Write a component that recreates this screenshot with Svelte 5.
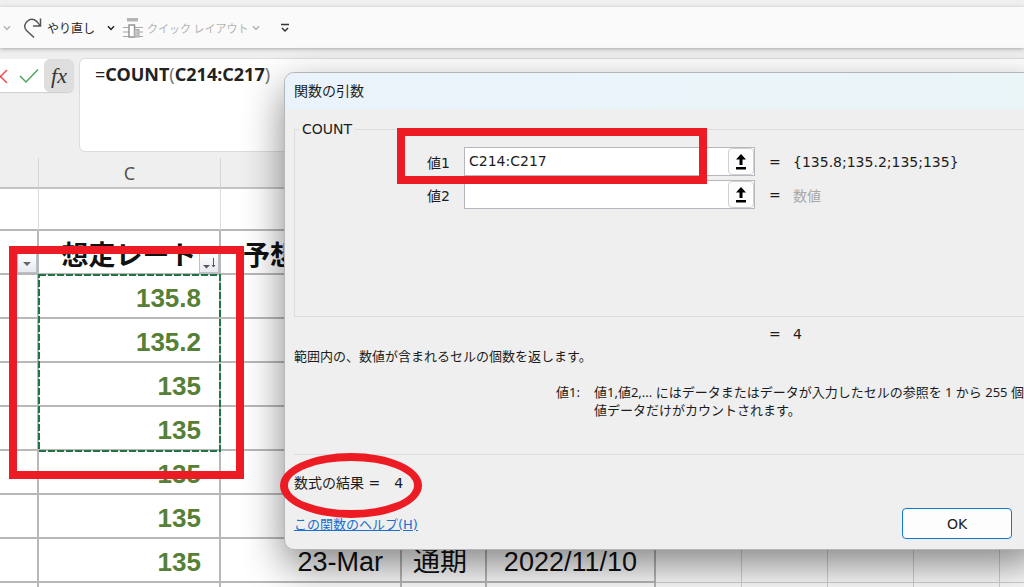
<script lang="ts">
  const rates = [
    { id: 1, rate: '135.8' },
    { id: 2, rate: '135.2' },
    { id: 3, rate: '135' },
    { id: 4, rate: '135' },
    { id: 5, rate: '135' },
    { id: 6, rate: '135' },
    { id: 7, rate: '135', month: '23-Mar', term: '通期', date: '2022/11/10' },
    { id: 8, rate: '' }
  ];
  const extraCols = [1, 2, 3, 4, 5];

  let args = $state([
    { id: 'arg1', label: '値1', value: 'C214:C217', result: '{135.8;135.2;135;135}', empty: false },
    { id: 'arg2', label: '値2', value: '', result: '数値', empty: true }
  ]);
</script>

{#snippet chevron()}
  <svg class="chevron" viewBox="0 0 8 6" aria-hidden="true">
    <path d="M1 1.2 L4 4.4 L7 1.2" />
  </svg>
{/snippet}

<div class="app">
  <header class="toolbar">
    <button class="tool tool--off tool--drop" aria-label="その他">{@render chevron()}</button>
    <button class="tool">
      <svg class="icon icon--redo" viewBox="0 0 20 22" aria-hidden="true">
        <path d="M17.500 1.500 V9 H10 M17 8.500 C14 3 9.500 1 5.500 3.300 C1 6 .6 10.500 3.500 13.500 L11 20.500" />
      </svg>
      やり直し
    </button>
    <button class="tool tool--drop" aria-label="やり直しの一覧">{@render chevron()}</button>
    <button class="tool tool--off tool--layout" disabled>
      <svg class="icon icon--layout" viewBox="0 0 20 22" aria-hidden="true">
        <rect x="4" y="1" width="11" height="3.500" fill="#b5b5b5" />
        <path d="M0 10.500 H20 M0 15 H20 M0 19.500 H20" stroke="#a8a8a8" stroke-width="1.200" />
        <rect x="6" y="8" width="5.500" height="12" fill="#fff" stroke="#959595" stroke-width="1.500" />
        <rect x="11.500" y="12.500" width="4.500" height="7.500" fill="#c4c4c4" stroke="#aaa" />
      </svg>
      クイック レイアウト
      {@render chevron()}
    </button>
    <button class="tool tool--more" aria-label="ツール バーのカスタマイズ">
      <svg class="icon icon--more" viewBox="0 0 10 10" aria-hidden="true">
        <path d="M1 1.500 H9 M2 5 L5 8 L8 5" />
      </svg>
    </button>
  </header>

  <div class="formula">
    <div class="formula__buttons">
      <button class="formula__btn formula__btn--cancel" aria-label="キャンセル">
        <svg viewBox="0 0 8 16" aria-hidden="true"><path d="M-6 2 L7 15 M7 2 L-6 15" stroke="#ee4b4b" /></svg>
      </button>
      <button class="formula__btn formula__btn--enter" aria-label="入力">
        <svg viewBox="0 0 20 16" aria-hidden="true"><path d="M1 8 L7 14 L19 1.500" stroke="#4da564" /></svg>
      </button>
      <button class="formula__btn formula__btn--fx">fx</button>
    </div>
    <div class="formula__text">=<b>COUNT</b><i>(</i><b>C214:C217</b><i>)</i></div>
  </div>

  <main class="sheet">
    <table>
      <colgroup>
        <col class="col-b" /><col class="col-c" /><col class="col-d" /><col class="col-e" /><col class="col-f" />
        {#each extraCols as c (c)}<col class="col-x" />{/each}
      </colgroup>
      <thead>
        <tr class="letters">
          <th></th><th>C</th><th></th><th></th><th></th>
          {#each extraCols as c (c)}<th></th>{/each}
        </tr>
      </thead>
      <tbody>
        <tr class="blank">
          <td></td><td></td><td></td><td></td><td></td>
          {#each extraCols as c (c)}<td class="plain"></td>{/each}
        </tr>
        <tr class="titles">
          <th>
            <button class="filter" aria-label="フィルター">
              <svg viewBox="0 0 18 18" aria-hidden="true"><path d="M5 8 H13 L9 12 Z" fill="#666" /></svg>
            </button>
          </th>
          <th>
            想定レート
            <button class="filter" aria-label="並べ替え">
              <svg viewBox="0 0 18 18" aria-hidden="true">
                <path d="M3 11 H10 L6.500 14.500 Z" fill="#555" />
                <path d="M13.500 4 V12.500 M12 11 L13.500 13 L15 11" fill="none" stroke="#555" />
              </svg>
            </button>
          </th>
          <th class="next">予想</th><th></th><th></th>
          {#each extraCols as c (c)}<td class="plain"></td>{/each}
        </tr>
        {#each rates as row (row.id)}
          <tr>
            <td></td>
            <td class="rate">{row.rate}</td>
            <td class="num">{row.month ?? ''}</td>
            <td class="term">{row.term ?? ''}</td>
            <td class="num">{row.date ?? ''}</td>
            {#each extraCols as c (c)}<td class="plain"></td>{/each}
          </tr>
        {/each}
      </tbody>
    </table>
    <svg class="ants" aria-hidden="true">
      <rect x="1" y="1" width="181" height="176" />
    </svg>
  </main>

  <section class="dialog" role="dialog" aria-labelledby="dialog-title">
    <h1 id="dialog-title">関数の引数</h1>
    <div class="dialog__body">
      <fieldset>
        <legend>COUNT</legend>
        {#each args as arg (arg.id)}
          <div class="arg">
            <label for={arg.id}>{arg.label}</label>
            <div class="arg__field">
              <input id={arg.id} type="text" bind:value={arg.value} />
              <button aria-label="範囲を選択">
                <svg viewBox="0 0 12 16" aria-hidden="true">
                  <path d="M6 0 L11 5.500 H7.500 V11 H4.500 V5.500 H1 Z M1 13 H11 V15.500 H1 Z" />
                </svg>
              </button>
            </div>
            <span>=</span>
            <span class:muted={arg.empty}>{arg.result}</span>
          </div>
        {/each}
      </fieldset>
      <div class="arg arg--total">
        <span>=</span>
        <span>4</span>
      </div>
      <p class="about">範囲内の、数値が含まれるセルの個数を返します。</p>
      <dl>
        <dt>値1:</dt>
        <dd>値1,値2,... にはデータまたはデータが入力したセルの参照を 1 から 255 個<br />値データだけがカウントされます。</dd>
      </dl>
      <hr />
      <p class="result"><span>数式の結果 =</span><span>4</span></p>
      <footer>
        <a href="#help">この関数のヘルプ(H)</a>
        <button class="ok">OK</button>
      </footer>
    </div>
  </section>

  <div class="mark mark--range"></div>
  <div class="mark mark--arg"></div>
  <div class="mark mark--result"></div>
</div>

<style>
  :global(body) {
    margin: 0;
    background: #efefef;
  }

  .app {
    position: relative;
    height: 100vh;
    overflow: hidden;
    font-family: 'DejaVu Sans', 'Noto Sans CJK JP', sans-serif;
    font-size: 14px;
    color: #1c1c1c;
  }

  .app * {
    box-sizing: border-box;
  }

  button {
    padding: 0;
    border: 0;
    background: none;
    font: inherit;
    color: inherit;
  }

  svg {
    display: block;
  }

  /* toolbar */
  .toolbar {
    display: flex;
    align-items: center;
    height: 41px;
    margin-top: 7px;
    background: #fafafa;
    box-shadow: 0 1px 4px rgba(0, 0, 0, 0.3);
  }

  .tool {
    display: flex;
    align-items: center;
    gap: 4px;
    font-family: 'Noto Sans CJK JP', sans-serif;
    font-size: 12px;
    color: #222;
    white-space: nowrap;
  }

  .tool--off {
    color: #b3b3b3;
  }

  .tool--layout {
    font-size: 11px;
  }

  .tool--drop {
    width: 24px;
    justify-content: center;
  }

  .tool--drop:first-child {
    width: 14px;
    margin-right: 9px;
  }

  .tool--drop:nth-child(3) {
    margin: 0 0 0 4px;
  }

  .chevron {
    width: 8px;
    height: 6px;
    fill: none;
    stroke: currentColor;
    stroke-width: 1.5;
  }

  .icon {
    width: 20px;
    height: 22px;
    fill: none;
  }

  .icon--redo {
    stroke: #555;
    stroke-width: 1.5;
  }

  .tool--more {
    margin-left: 20px;
  }

  .icon--more {
    width: 10px;
    height: 10px;
    stroke: #333;
    stroke-width: 1.5;
  }

  /* formula bar */
  .formula {
    display: flex;
    align-items: flex-start;
    gap: 6px;
    padding: 11px 0 7px;
  }

  .formula__buttons {
    display: flex;
    height: 33px;
    border-radius: 0 6px 6px 0;
    background: #fff;
    box-shadow: 0 1px 1px #ccc;
  }

  .formula__btn {
    display: flex;
    align-items: center;
  }

  .formula__btn svg {
    height: 16px;
    fill: none;
    stroke-width: 1.5;
  }

  .formula__btn--cancel {
    width: 19px;
  }

  .formula__btn--cancel svg {
    width: 8px;
  }

  .formula__btn--enter {
    width: 25px;
  }

  .formula__btn--enter svg {
    width: 20px;
  }

  .formula__btn--fx {
    justify-content: center;
    width: 30px;
    border-radius: 6px;
    background: #dedede;
    font-family: 'Liberation Serif', serif;
    font-size: 22px;
    font-style: italic;
    color: #333;
  }

  .formula__text {
    flex: 1;
    height: 92px;
    padding: 3px 15px;
    border-radius: 5px 0 0 5px;
    background: #fff;
    box-shadow: 0 0 0 1px #dcdcdc;
    font-family: 'Noto Sans', sans-serif;
    font-size: 18px;
    line-height: 24px;
    color: #222;
  }

  .formula__text i {
    font-style: normal;
    color: #777;
  }

  /* sheet */
  .sheet {
    position: relative;
  }

  table {
    table-layout: fixed;
    width: 1086px;
    border-collapse: separate;
    border-spacing: 0;
    background: #fff;
    font-family: 'Liberation Sans', 'Noto Sans CJK JP', sans-serif;
    font-size: 27px;
    line-height: 32px;
    color: #111;
  }

  .col-b { width: 39px; }
  .col-c { width: 182px; }
  .col-d { width: 181px; }
  .col-e { width: 85px; }
  .col-f { width: 169px; }
  .col-x { width: 86px; }

  th,
  td {
    position: relative;
    height: 44px;
    padding: 4px 0 0;
    border: solid #b8b8b8;
    border-width: 0 2px 2px 0;
    white-space: nowrap;
  }

  .letters th {
    height: 31px;
    padding: 0;
    border-width: 0 1px 2px 0;
    border-color: #d4d4d4 #d4d4d4 #c4c4c4;
    background: #efefef;
    font-family: 'Noto Sans', sans-serif;
    font-size: 18px;
    font-weight: normal;
    line-height: 24px;
    color: #555;
  }

  .blank td {
    height: 42px;
    border-right: 1px solid #ddd;
  }

  .titles th {
    padding-top: 8px;
  }

  .titles .next {
    padding-left: 22px;
    text-align: left;
  }

  td.plain {
    border-width: 0 1px 1px 0;
    border-color: #d4d4d4;
  }

  .rate {
    padding-right: 18px;
    font-size: 26px;
    font-weight: bold;
    text-align: right;
    color: #568035;
  }

  .num {
    padding-right: 17px;
    text-align: right;
  }

  .term {
    padding-right: 7px;
    text-align: center;
  }

  .filter {
    position: absolute;
    right: 0;
    bottom: 0;
    width: 20px;
    height: 20px;
    border: 1px solid #bbc0c8;
    background: linear-gradient(#fff, #e6e9ef);
  }

  .ants {
    position: absolute;
    left: 38px;
    top: 116px;
    width: 184px;
    height: 180px;
    fill: none;
    stroke: #217346;
    stroke-width: 2;
    stroke-dasharray: 7 2;
  }

  /* dialog */
  .dialog {
    position: absolute;
    top: 72px;
    left: 284px;
    right: -16px;
    border: 1px solid #b4b6b8;
    border-radius: 10px;
    background: #efefef;
    box-shadow: 0 16px 40px rgba(0, 0, 0, 0.48);
  }

  h1 {
    margin: 0;
    padding: 0 9px;
    border-radius: 9px 9px 0 0;
    background: linear-gradient(90deg, #eaf3fb, #eaf5f8);
    font-size: 14px;
    font-weight: normal;
    line-height: 36px;
  }

  .dialog__body {
    padding: 11px 0 10px 9px;
  }

  fieldset {
    min-width: 0;
    height: 197px;
    margin: 0;
    padding: 9px 0 0;
    border: 1px solid #dcdcdc;
  }

  legend {
    margin-left: 4px;
    padding: 0 3px;
    line-height: 18px;
  }

  .arg {
    display: grid;
    grid-template-columns: 155px 291px 10px 1fr;
    column-gap: 14px;
    align-items: center;
    margin-bottom: 4px;
    white-space: nowrap;
  }

  .arg label {
    text-align: right;
  }

  .arg__field {
    display: flex;
    height: 29px;
    border: 1px solid #b5b7bf;
    background: #fff;
  }

  .arg__field input {
    flex: 1;
    min-width: 0;
    padding: 0 4px 2px;
    border: 0;
    outline: 0;
    background: none;
    font: inherit;
    color: inherit;
  }

  .arg__field button {
    display: grid;
    place-items: center;
    width: 26px;
    border: 1px solid #d0d0d0;
    border-radius: 4px;
    background: #fdfdfd;
  }

  .arg__field svg {
    width: 12px;
    height: 16px;
  }

  .muted {
    color: #a8a8a8;
  }

  .arg--total {
    margin: 7px 0 0 1px;
    line-height: 20px;
  }

  .arg--total span:first-child {
    grid-column: 3;
  }

  p {
    margin: 0;
  }

  .about {
    margin-top: 3px;
    font-size: 13px;
    line-height: 20px;
  }

  dl {
    display: grid;
    grid-template-columns: 286px 1fr;
    column-gap: 14px;
    margin: 16px 0 35px;
    font-family: 'Noto Sans', 'Noto Sans CJK JP', sans-serif;
    font-size: 13px;
    line-height: 18px;
    white-space: nowrap;
  }

  dt {
    text-align: right;
  }

  dd {
    margin: 0;
  }

  hr {
    height: 1px;
    margin: 0;
    border: 0;
    background: #dcdcdc;
  }

  .result {
    display: flex;
    gap: 14px;
    margin-top: 18px;
    line-height: 20px;
  }

  footer {
    display: flex;
    align-items: center;
    justify-content: space-between;
    margin: 15px 27px 0 0;
  }

  a {
    font-size: 13px;
    color: #1a6fd0;
  }

  .ok {
    width: 110px;
    height: 31px;
    border: 1px solid #0f78d0;
    border-radius: 4px;
    background: #fdfdfd;
  }

  /* red highlights over the sheet and dialog */
  .mark {
    position: absolute;
    border: 8px solid #ed1c24;
    pointer-events: none;
  }

  .mark--range {
    left: 9px;
    top: 246px;
    width: 235px;
    height: 233px;
  }

  .mark--arg {
    left: 397px;
    top: 128px;
    width: 310px;
    height: 56px;
  }

  .mark--result {
    left: 280px;
    top: 453px;
    width: 142px;
    height: 65px;
    border-radius: 50%;
  }
</style>
